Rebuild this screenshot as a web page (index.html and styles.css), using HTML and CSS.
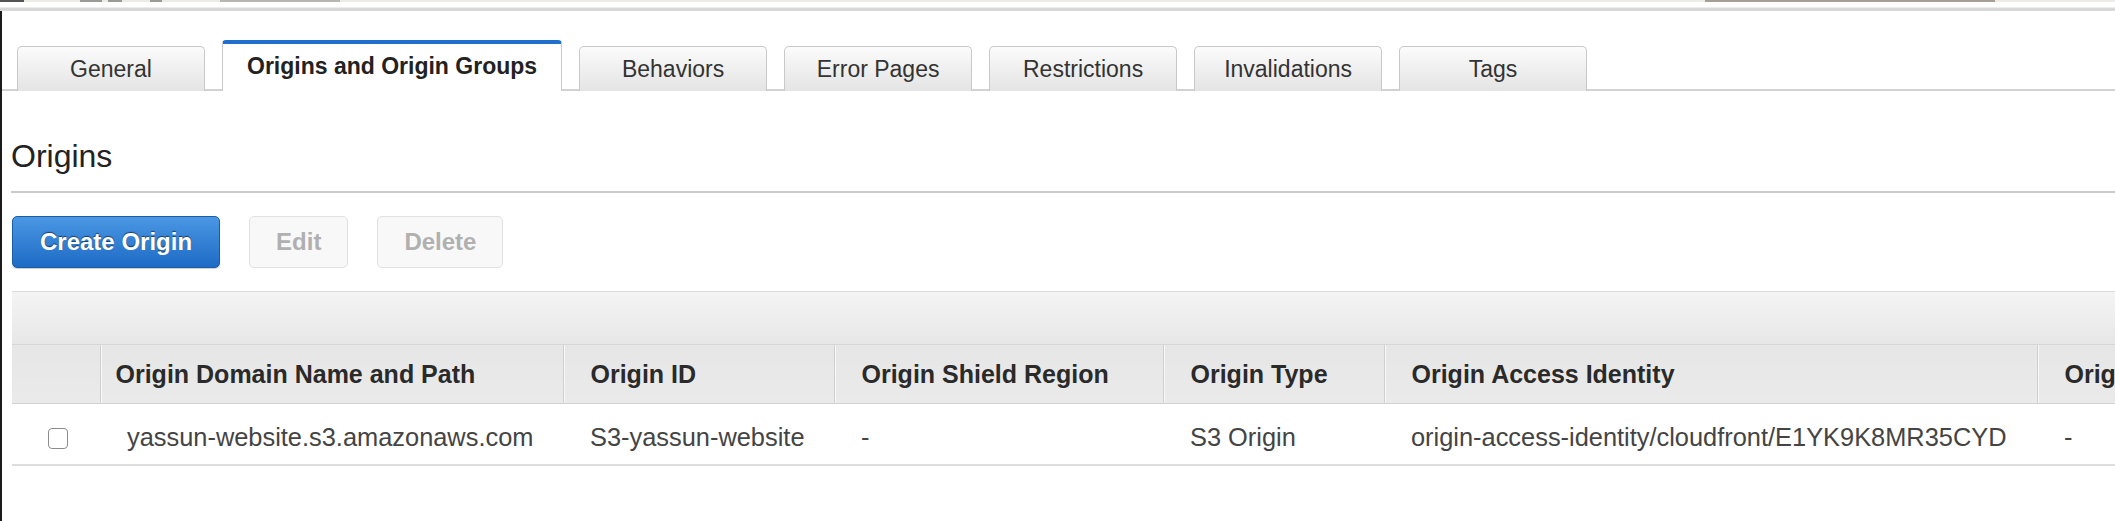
FILE: index.html
```html
<!DOCTYPE html>
<html lang="en">
<head>
<meta charset="utf-8">
<title>Origins and Origin Groups</title>
<link rel="stylesheet" href="styles.css">
</head>
<body>
<div class="top">
  <div class="top-strip"><span class="blob b0"></span><span class="blob b1"></span><span class="blob b2"></span><span class="blob b3"></span><span class="blob b4"></span><span class="blob b5"></span></div>
</div>
<div class="page">
  <nav class="tabs">
    <div class="tab">General</div>
    <div class="tab active">Origins and Origin Groups</div>
    <div class="tab">Behaviors</div>
    <div class="tab">Error Pages</div>
    <div class="tab">Restrictions</div>
    <div class="tab">Invalidations</div>
    <div class="tab">Tags</div>
  </nav>
  <section class="section">
    <h2 class="heading">Origins</h2>
    <div class="rule"></div>
    <div class="toolbar">
      <button class="btn primary">Create Origin</button>
      <button class="btn disabled">Edit</button>
      <button class="btn disabled">Delete</button>
    </div>
    <div class="grid">
      <div class="band"></div>
      <table class="table">
        <colgroup>
          <col class="c0"><col class="c1"><col class="c2"><col class="c3"><col class="c4"><col class="c5"><col class="c6">
        </colgroup>
        <thead>
          <tr>
            <th class="sel"></th>
            <th class="first">Origin Domain Name and Path</th>
            <th>Origin ID</th>
            <th>Origin Shield Region</th>
            <th>Origin Type</th>
            <th>Origin Access Identity</th>
            <th>Origin Protocol Policy</th>
          </tr>
        </thead>
        <tbody>
          <tr>
            <td class="sel"><span class="checkbox"></span></td>
            <td class="first">yassun-website.s3.amazonaws.com</td>
            <td>S3-yassun-website</td>
            <td>-</td>
            <td>S3 Origin</td>
            <td>origin-access-identity/cloudfront/E1YK9K8MR35CYD</td>
            <td>-</td>
          </tr>
        </tbody>
      </table>
    </div>
  </section>
</div>
</body>
</html>
```
FILE: styles.css
```css
html, body {
  margin: 0;
  padding: 0;
  background: #fff;
  overflow: hidden;
  font-family: "Liberation Sans", Arial, Helvetica, sans-serif;
  color: #333;
}

.top {
  height: 8px;
  border-bottom: 3px solid #d8d8d8;
  box-shadow: 0 -1px 0 #ececec inset;
}
.top-strip {
  position: relative;
  height: 2px;
  background: #ecebe6;
}
.blob {
  position: absolute;
  top: 0;
  height: 2px;
  background: #9a9a98;
}
.b0 { left: 0; width: 24px; background: #555; }
.b1 { left: 80px; width: 22px; }
.b2 { left: 108px; width: 14px; }
.b3 { left: 150px; width: 12px; }
.b4 { left: 220px; width: 120px; background: #b8b6b0; }
.b5 { left: 1705px; width: 290px; background: #a69f96; }

.page {
  box-sizing: border-box;
  border-left: 2px solid #1a1a1a;
  padding-top: 29px;
  height: 510px;
}

/* Tabs */
.tabs {
  display: flex;
  align-items: flex-end;
  gap: 17px;
  padding-left: 15px;
  border-bottom: 2px solid #d2d2d2;
}
.tab {
  box-sizing: border-box;
  min-width: 188px;
  height: 45px;
  padding: 0 22px;
  display: flex;
  align-items: center;
  justify-content: center;
  font-size: 23px;
  color: #333;
  background: linear-gradient(#fbfbfb, #e4e4e4);
  border: 1px solid #c9c9c9;
  border-bottom: none;
  border-radius: 5px 5px 0 0;
  margin-bottom: -2px;
}
.tab.active {
  height: 51px;
  padding: 0 24px 2px;
  background: #fff;
  border-top: 4px solid #1f6fcd;
  border-radius: 4px 4px 0 0;
  font-weight: bold;
  color: #222;
}

/* Section */
.section {
  padding-left: 10px;
}
.heading {
  margin: 47px 0 0 -1px;
  font-size: 32px;
  line-height: 36px;
  font-weight: normal;
  color: #222;
}
.rule {
  margin-top: 17px;
  margin-left: -1px;
  height: 2px;
  background: #cacaca;
}

.toolbar {
  display: flex;
  gap: 29px;
  margin-top: 23px;
}
.btn {
  box-sizing: border-box;
  height: 52px;
  padding: 0 26px;
  font-family: "Liberation Sans", Arial, sans-serif;
  font-size: 24px;
  font-weight: bold;
  border-radius: 5px;
}
.btn.primary {
  padding: 0 27px;
  color: #fff;
  background: linear-gradient(#4b97e4, #1d6bc5);
  border: 1px solid #1a5ca6;
  text-shadow: 0 -1px 1px rgba(0, 0, 0, 0.55);
  box-shadow: 0 1px 1px rgba(0, 0, 0, 0.2);
}
.btn.disabled {
  color: #b0b0b0;
  background: #f8f8f8;
  border: 1px solid #e2e2e2;
}

/* Table */
.grid {
  margin-top: 23px;
  overflow: hidden;
}
.band {
  height: 52px;
  background: linear-gradient(#f4f4f4, #e7e7e7);
  border-top: 1px solid #dadada;
}
.table {
  table-layout: fixed;
  width: 2225px;
  border-collapse: collapse;
}
.c0 { width: 88px; }
.c1 { width: 463px; }
.c2 { width: 271px; }
.c3 { width: 329px; }
.c4 { width: 221px; }
.c5 { width: 653px; }
.c6 { width: 200px; }

.table th {
  height: 58px;
  padding: 0 0 0 27px;
  text-align: left;
  font-size: 25px;
  font-weight: bold;
  color: #2a2a2a;
  white-space: nowrap;
  overflow: hidden;
  background: linear-gradient(#e6e6e6, #eaeaea);
  border-top: 1px solid #d6d6d6;
  border-bottom: 1px solid #d2d2d2;
  border-left: 1px solid #cfcfcf;
  box-shadow: inset 1px 0 0 #f8f8f8;
}
.table th.sel {
  border-left: none;
  box-shadow: none;
  padding: 0;
}
.table th.first {
  padding-left: 15px;
}
.table td {
  height: 54px;
  padding: 6px 0 0 27px;
  font-size: 25.4px;
  color: #444;
  white-space: nowrap;
  overflow: hidden;
  border-bottom: 2px solid #dedede;
}
.table td.first {
  padding-left: 27px;
}
.table td.sel {
  padding: 6px 0 0 36px;
}
.checkbox {
  display: block;
  box-sizing: border-box;
  width: 20px;
  height: 21px;
  border: 1.5px solid #8c8c8c;
  border-radius: 4px;
  background: #fff;
  margin-top: 2px;
}
```
